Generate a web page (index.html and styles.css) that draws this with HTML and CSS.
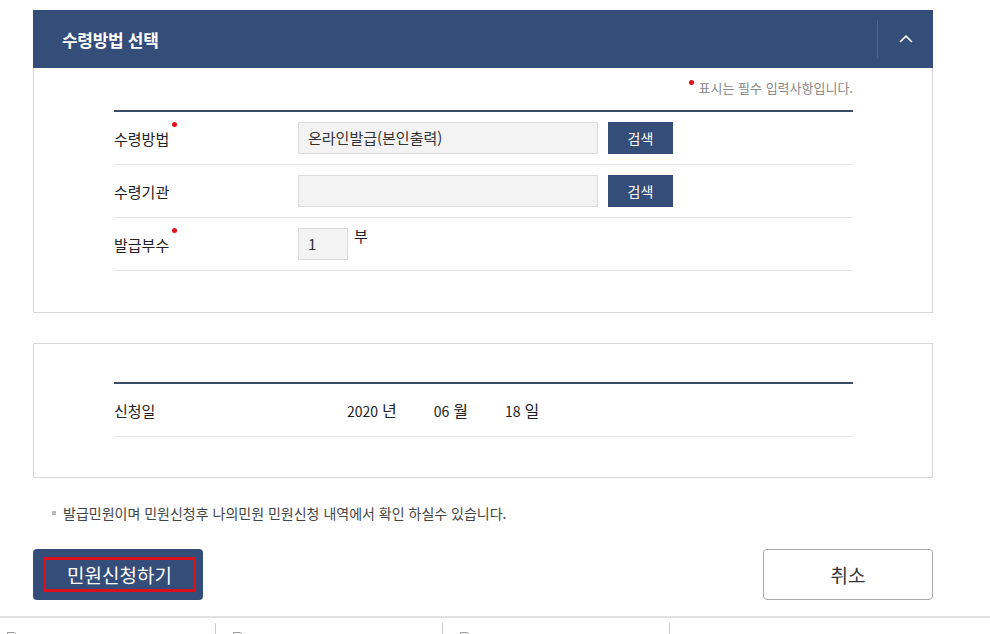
FILE: index.html
```html
<!DOCTYPE html>
<html lang="ko">
<head>
<meta charset="utf-8">
<title>수령방법 선택</title>
<link rel="stylesheet" href="styles.css">
</head>
<body>
<div class="wrap">
  <section class="panel">
    <div class="panel-head">
      <h2 class="panel-title">수령방법 선택</h2>
      <button class="toggle" type="button" aria-label="접기">
        <svg width="14" height="8" viewBox="0 0 14 8"><path d="M1 7 L7 1.2 L13 7" fill="none" stroke="#fff" stroke-width="1.6"/></svg>
      </button>
    </div>
    <div class="panel-body">
      <p class="req-note"><span class="req-dot"></span>표시는 필수 입력사항입니다.</p>
      <div class="form-table">
        <div class="row">
          <div class="label"><span class="req">수령방법</span></div>
          <div class="value">
            <div class="input wide">온라인발급(본인출력)</div>
            <button class="btn-search" type="button">검색</button>
          </div>
        </div>
        <div class="row">
          <div class="label"><span>수령기관</span></div>
          <div class="value">
            <div class="input wide"></div>
            <button class="btn-search" type="button">검색</button>
          </div>
        </div>
        <div class="row">
          <div class="label"><span class="req">발급부수</span></div>
          <div class="value">
            <div class="input small">1</div>
            <span class="unit">부</span>
          </div>
        </div>
      </div>
    </div>
  </section>

  <section class="panel plain">
    <div class="panel-body second">
      <div class="form-table">
        <div class="row date-row">
          <div class="label"><span>신청일</span></div>
          <div class="value dates">
            <span class="d">2020 <b>년</b></span>
            <span class="d">06 <b>월</b></span>
            <span class="d">18 <b>일</b></span>
          </div>
        </div>
      </div>
    </div>
  </section>

  <p class="info"><span class="bullet"></span>발급민원이며 민원신청후 나의민원 민원신청 내역에서 확인 하실수 있습니다.</p>

  <div class="actions">
    <button class="btn-submit" type="button"><span class="focus-ring">민원신청하기</span></button>
    <button class="btn-cancel" type="button">취소</button>
  </div>
</div>

<div class="footer-strip">
  <div class="cell first"><svg class="doc" width="11" height="13" viewBox="0 0 11 13"><path d="M0.5 0.5 H7.5 L10.5 3.5 V12.5 H0.5 Z" fill="#fff" stroke="#999"/></svg></div>
  <div class="cell"><svg class="doc" width="11" height="13" viewBox="0 0 11 13"><path d="M0.5 0.5 H7.5 L10.5 3.5 V12.5 H0.5 Z" fill="#fff" stroke="#999"/></svg></div>
  <div class="cell"><svg class="doc" width="11" height="13" viewBox="0 0 11 13"><path d="M0.5 0.5 H7.5 L10.5 3.5 V12.5 H0.5 Z" fill="#fff" stroke="#999"/></svg></div>
  <div class="cell last"></div>
</div>
</body>
</html>
```

FILE: styles.css
```css
* { box-sizing: border-box; }
html, body { margin: 0; padding: 0; background: #fff; }
body {
  font-family: "Noto Sans CJK KR", "Noto Sans", sans-serif;
  color: #333;
  overflow: hidden;
  height: 634px;
}
.wrap {
  width: 900px;
  margin-left: 33px;
  padding-top: 10px;
}
.panel-head {
  height: 58px;
  background: #354d79;
  display: flex;
  align-items: center;
  justify-content: space-between;
}
.panel-title {
  margin: 0;
  padding-left: 29px;
  font-size: 17px;
  font-weight: 700;
  color: #fff;
  letter-spacing: -0.3px;
}
.toggle {
  width: 56px;
  height: 38px;
  border: 0;
  border-left: 1px solid #4a6190;
  background: transparent;
  padding: 0;
  display: flex;
  align-items: center;
  justify-content: center;
  cursor: pointer;
}
.panel-body {
  border: 1px solid #d6d6d6;
  border-top: 0;
  padding: 9px 79px 41px 80px;
}
.panel.plain .panel-body { border-top: 1px solid #d6d6d6; }
.panel-body.second { padding-top: 38px; padding-bottom: 40px; }
.panel.plain { margin-top: 30px; }

.req-note {
  margin: 0 0 11px;
  text-align: right;
  font-size: 13px;
  line-height: 22px;
  color: #888;
}
.req-dot {
  display: inline-block;
  width: 5px;
  height: 5px;
  border-radius: 50%;
  background: #e0101a;
  vertical-align: top;
  margin-top: 3px;
  margin-right: 5px;
}
.form-table { border-top: 2px solid #3b4c68; }
.row {
  display: flex;
  align-items: center;
  height: 53px;
  border-bottom: 1px solid #e6e6e6;
}
.label {
  width: 184px;
  font-size: 15px;
  color: #222;
}
.label span { position: relative; }
.label .req::after {
  content: "";
  position: absolute;
  right: -8px;
  top: -6px;
  width: 5px;
  height: 5px;
  border-radius: 50%;
  background: #e0101a;
}
.value { display: flex; align-items: center; }
.input {
  height: 32px;
  border: 1px solid #dcdcdc;
  background: #f3f3f3;
  font-size: 15px;
  color: #333;
  line-height: 30px;
  padding-left: 9px;
}
.input.wide { width: 300px; }
.input.small { width: 50px; }
.btn-search {
  margin-left: 10px;
  width: 65px;
  height: 32px;
  border: 0;
  background: #354d79;
  color: #fff;
  font-family: inherit;
  font-size: 14px;
  padding: 0;
}
.unit {
  margin-left: 6px;
  font-size: 15px;
  align-self: flex-start;
  margin-top: -3px;
  color: #222;
}
.dates { padding-left: 49px; font-size: 14px; color: #222; }
.dates .d { margin-right: 37px; }
.dates b { font-weight: 400; font-size: 16px; }

.info {
  margin: 24px 0 0 19px;
  font-size: 14px;
  color: #444;
  line-height: 22px;
  display: flex;
  align-items: center;
}
.bullet {
  width: 4px;
  height: 4px;
  background: #bbb;
  margin-right: 7px;
}
.actions {
  margin-top: 25px;
  display: flex;
  justify-content: space-between;
}
.btn-submit {
  width: 170px;
  height: 51px;
  border: 0;
  border-radius: 4px;
  background: #354d79;
  padding: 8px 7px 8px 10px;
  display: flex;
}
.focus-ring {
  flex: 1;
  border: 3px solid #d9111b;
  display: flex;
  align-items: center;
  justify-content: center;
  color: #fff;
  font-family: "Noto Sans CJK KR", sans-serif;
  font-size: 19px;
}
.btn-cancel {
  width: 170px;
  height: 51px;
  border: 1px solid #aaa;
  border-radius: 4px;
  background: #fff;
  color: #333;
  font-family: inherit;
  font-size: 19px;
}
.footer-strip {
  margin-top: 16px;
  border-top: 2px solid #e2e2e2;
  display: flex;
  padding-top: 5px;
}
.cell {
  width: 227px;
  height: 20px;
  border-right: 1px solid #ccc;
  padding: 9px 0 0 17px;
}
.cell.first { width: 216px; padding-left: 7px; }
.cell.last { border-right: 0; flex: 1; }
.doc { display: block; }
```
